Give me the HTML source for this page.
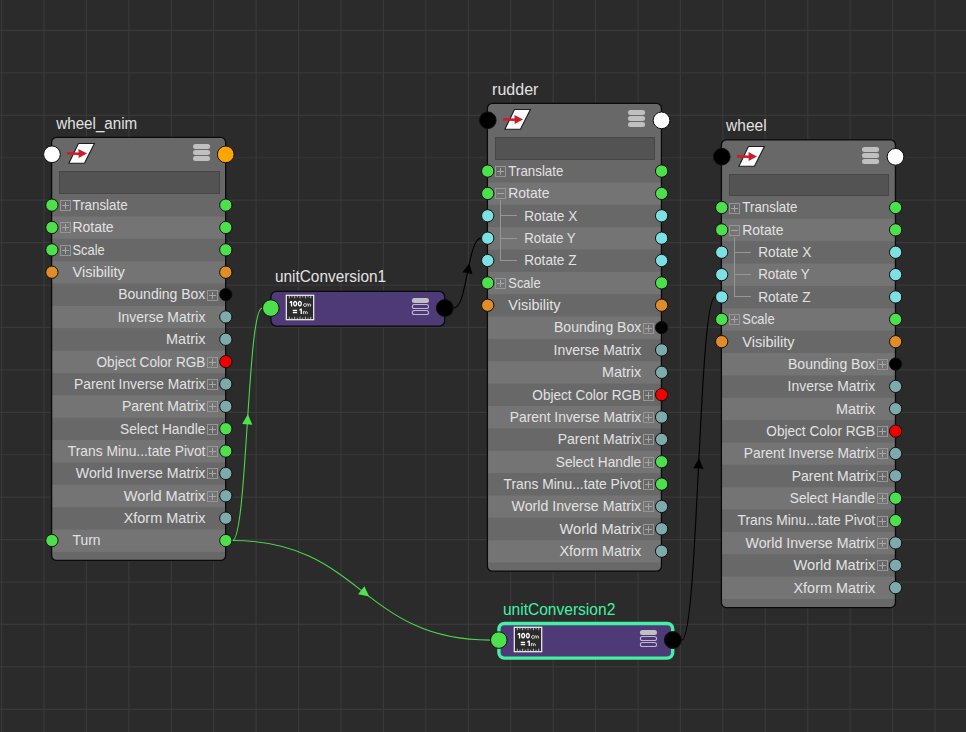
<!DOCTYPE html><html><head><meta charset="utf-8"><style>html,body{margin:0;padding:0;background:#2b2b2b;overflow:hidden}svg{display:block}</style></head><body><svg width="966" height="732" viewBox="0 0 966 732" font-family="Liberation Sans, sans-serif">
<rect width="966" height="732" fill="#2b2b2b"/>
<path d="M1.55 0V732M43.98 0V732M86.41 0V732M128.84 0V732M171.27 0V732M213.70 0V732M256.13 0V732M298.56 0V732M340.99 0V732M383.42 0V732M425.85 0V732M468.28 0V732M510.71 0V732M553.14 0V732M595.57 0V732M638.00 0V732M680.43 0V732M722.86 0V732M765.29 0V732M807.72 0V732M850.15 0V732M892.58 0V732M935.01 0V732M0 30.45H966M0 72.88H966M0 115.31H966M0 157.74H966M0 200.17H966M0 242.60H966M0 285.03H966M0 327.46H966M0 369.89H966M0 412.32H966M0 454.75H966M0 497.18H966M0 539.61H966M0 582.04H966M0 624.47H966M0 666.90H966M0 709.33H966" stroke="#393939" stroke-width="1.2" fill="none"/>
<path d="M232.40 540.53C247.25 540.53 247.25 308.10 262.10 308.10" stroke="#4bd64b" stroke-width="1.1" fill="none"/>
<path d="M247.89 414.24L252.34 424.64L242.16 423.99Z" fill="#4fe34f"/>
<path d="M232.40 540.53C361.25 540.53 361.25 640.10 490.10 640.10" stroke="#4bd64b" stroke-width="1.1" fill="none"/>
<path d="M369.24 596.49L358.13 594.35L364.37 586.28Z" fill="#4fe34f"/>
<path d="M453.75 308.05C467.42 308.05 467.42 238.16 481.10 238.16" stroke="#000000" stroke-width="1.1" fill="none"/>
<path d="M469.36 263.19L472.43 274.08L462.42 272.13Z" fill="#000000"/>
<path d="M681.75 640.05C698.42 640.05 698.42 296.97 715.10 296.97" stroke="#000000" stroke-width="1.1" fill="none"/>
<path d="M698.92 458.42L703.52 468.76L693.33 468.26Z" fill="#000000"/>
<text x="56.30" y="128.60" font-size="15.8" fill="#e2e2e2" text-anchor="start" textLength="80.9" lengthAdjust="spacingAndGlyphs">wheel_anim</text>
<clipPath id="c51"><rect x="51.60" y="137.40" width="174.05" height="423.06" rx="5"/></clipPath>
<g clip-path="url(#c51)">
<rect x="51.60" y="137.40" width="174.05" height="423.06" fill="#686868"/>
<rect x="51.60" y="216.46" width="174.05" height="22.36" fill="#747474"/>
<rect x="51.60" y="261.18" width="174.05" height="22.36" fill="#747474"/>
<rect x="51.60" y="305.90" width="174.05" height="22.36" fill="#747474"/>
<rect x="51.60" y="350.62" width="174.05" height="22.36" fill="#747474"/>
<rect x="51.60" y="395.34" width="174.05" height="22.36" fill="#747474"/>
<rect x="51.60" y="440.06" width="174.05" height="22.36" fill="#747474"/>
<rect x="51.60" y="484.78" width="174.05" height="22.36" fill="#747474"/>
<rect x="51.60" y="529.50" width="174.05" height="22.36" fill="#747474"/>
</g>
<rect x="51.60" y="137.40" width="174.05" height="423.06" rx="5" fill="none" stroke="#0a0a0a" stroke-width="1.3"/>
<rect x="59.50" y="171.50" width="160.00" height="22.00" fill="#535353" stroke="#464646" stroke-width="1"/>
<path d="M78.45 143.50L94.40 143.50L84.45 163.30L68.90 163.30Z" fill="#ffffff" stroke="#1c1c1c" stroke-width="1.1" stroke-linejoin="miter"/>
<path d="M67.00 152.10L78.60 152.40L78.40 148.90L87.00 153.40L78.60 158.10L78.60 154.90L67.00 154.70Z" fill="#cc1c2a"/>
<rect x="193.00" y="144.00" width="17.1" height="5.0" rx="2.5" fill="#c0c0c0"/>
<rect x="193.00" y="149.97" width="17.1" height="5.0" rx="2.5" fill="#c0c0c0"/>
<rect x="193.00" y="155.94" width="17.1" height="5.0" rx="2.5" fill="#c0c0c0"/>
<circle cx="51.95" cy="154.30" r="8.35" fill="#ffffff" stroke="#101010" stroke-width="1.0"/>
<circle cx="225.70" cy="154.40" r="8.35" fill="#ffa500" stroke="#101010" stroke-width="1.0"/>
<rect x="60.50" y="200.50" width="10" height="10" fill="none" stroke="#969696" stroke-width="1"/>
<path d="M62.00 205.50H69.00" stroke="#a6a6a6" stroke-width="1" fill="none"/>
<path d="M65.50 202.00V209.00" stroke="#a6a6a6" stroke-width="1" fill="none"/>
<text x="72.50" y="210.00" font-size="14.2" fill="#e2e2e2" text-anchor="start" textLength="55.1" lengthAdjust="spacingAndGlyphs">Translate</text>
<circle cx="51.90" cy="205.13" r="6.15" fill="#4de04d" stroke="#101010" stroke-width="1.0"/>
<circle cx="225.80" cy="205.13" r="6.15" fill="#4de04d" stroke="#101010" stroke-width="1.0"/>
<rect x="60.50" y="222.50" width="10" height="10" fill="none" stroke="#969696" stroke-width="1"/>
<path d="M62.00 227.50H69.00" stroke="#a6a6a6" stroke-width="1" fill="none"/>
<path d="M65.50 224.00V231.00" stroke="#a6a6a6" stroke-width="1" fill="none"/>
<text x="72.50" y="232.36" font-size="14.2" fill="#e2e2e2" text-anchor="start" textLength="41.1" lengthAdjust="spacingAndGlyphs">Rotate</text>
<circle cx="51.90" cy="227.49" r="6.15" fill="#4de04d" stroke="#101010" stroke-width="1.0"/>
<circle cx="225.80" cy="227.49" r="6.15" fill="#4de04d" stroke="#101010" stroke-width="1.0"/>
<rect x="60.50" y="245.50" width="10" height="10" fill="none" stroke="#969696" stroke-width="1"/>
<path d="M62.00 250.50H69.00" stroke="#a6a6a6" stroke-width="1" fill="none"/>
<path d="M65.50 247.00V254.00" stroke="#a6a6a6" stroke-width="1" fill="none"/>
<text x="72.50" y="254.72" font-size="14.2" fill="#e2e2e2" text-anchor="start" textLength="32.3" lengthAdjust="spacingAndGlyphs">Scale</text>
<circle cx="51.90" cy="249.85" r="6.15" fill="#4de04d" stroke="#101010" stroke-width="1.0"/>
<circle cx="225.80" cy="249.85" r="6.15" fill="#4de04d" stroke="#101010" stroke-width="1.0"/>
<text x="72.50" y="277.08" font-size="14.2" fill="#e2e2e2" text-anchor="start" textLength="52.3" lengthAdjust="spacingAndGlyphs">Visibility</text>
<circle cx="51.90" cy="272.21" r="6.15" fill="#e08c28" stroke="#101010" stroke-width="1.0"/>
<circle cx="225.80" cy="272.21" r="6.15" fill="#e08c28" stroke="#101010" stroke-width="1.0"/>
<rect x="207.50" y="290.50" width="10" height="10" fill="none" stroke="#969696" stroke-width="1"/>
<path d="M209.00 295.50H216.00" stroke="#a6a6a6" stroke-width="1" fill="none"/>
<path d="M212.50 292.00V299.00" stroke="#a6a6a6" stroke-width="1" fill="none"/>
<text x="205.40" y="299.44" font-size="14.2" fill="#e2e2e2" text-anchor="end" textLength="87.2" lengthAdjust="spacingAndGlyphs">Bounding Box</text>
<circle cx="225.80" cy="294.57" r="6.15" fill="#000000" stroke="#101010" stroke-width="1.0"/>
<text x="205.40" y="321.80" font-size="14.2" fill="#e2e2e2" text-anchor="end" textLength="87.7" lengthAdjust="spacingAndGlyphs">Inverse Matrix</text>
<circle cx="225.80" cy="316.93" r="6.15" fill="#7daaaa" stroke="#101010" stroke-width="1.0"/>
<text x="205.40" y="344.16" font-size="14.2" fill="#e2e2e2" text-anchor="end" textLength="39.3" lengthAdjust="spacingAndGlyphs">Matrix</text>
<circle cx="225.80" cy="339.29" r="6.15" fill="#7daaaa" stroke="#101010" stroke-width="1.0"/>
<rect x="207.50" y="357.50" width="10" height="10" fill="none" stroke="#969696" stroke-width="1"/>
<path d="M209.00 362.50H216.00" stroke="#a6a6a6" stroke-width="1" fill="none"/>
<path d="M212.50 359.00V366.00" stroke="#a6a6a6" stroke-width="1" fill="none"/>
<text x="205.40" y="366.52" font-size="14.2" fill="#e2e2e2" text-anchor="end" textLength="108.9" lengthAdjust="spacingAndGlyphs">Object Color RGB</text>
<circle cx="225.80" cy="361.65" r="6.15" fill="#f00000" stroke="#101010" stroke-width="1.0"/>
<rect x="207.50" y="379.50" width="10" height="10" fill="none" stroke="#969696" stroke-width="1"/>
<path d="M209.00 384.50H216.00" stroke="#a6a6a6" stroke-width="1" fill="none"/>
<path d="M212.50 381.00V388.00" stroke="#a6a6a6" stroke-width="1" fill="none"/>
<text x="205.40" y="388.88" font-size="14.2" fill="#e2e2e2" text-anchor="end" textLength="131.4" lengthAdjust="spacingAndGlyphs">Parent Inverse Matrix</text>
<circle cx="225.80" cy="384.01" r="6.15" fill="#7daaaa" stroke="#101010" stroke-width="1.0"/>
<rect x="207.50" y="401.50" width="10" height="10" fill="none" stroke="#969696" stroke-width="1"/>
<path d="M209.00 406.50H216.00" stroke="#a6a6a6" stroke-width="1" fill="none"/>
<path d="M212.50 403.00V410.00" stroke="#a6a6a6" stroke-width="1" fill="none"/>
<text x="205.40" y="411.24" font-size="14.2" fill="#e2e2e2" text-anchor="end" textLength="83.5" lengthAdjust="spacingAndGlyphs">Parent Matrix</text>
<circle cx="225.80" cy="406.37" r="6.15" fill="#7daaaa" stroke="#101010" stroke-width="1.0"/>
<rect x="207.50" y="424.50" width="10" height="10" fill="none" stroke="#969696" stroke-width="1"/>
<path d="M209.00 429.50H216.00" stroke="#a6a6a6" stroke-width="1" fill="none"/>
<path d="M212.50 426.00V433.00" stroke="#a6a6a6" stroke-width="1" fill="none"/>
<text x="205.40" y="433.60" font-size="14.2" fill="#e2e2e2" text-anchor="end" textLength="85.4" lengthAdjust="spacingAndGlyphs">Select Handle</text>
<circle cx="225.80" cy="428.73" r="6.15" fill="#4de04d" stroke="#101010" stroke-width="1.0"/>
<rect x="207.50" y="446.50" width="10" height="10" fill="none" stroke="#969696" stroke-width="1"/>
<path d="M209.00 451.50H216.00" stroke="#a6a6a6" stroke-width="1" fill="none"/>
<path d="M212.50 448.00V455.00" stroke="#a6a6a6" stroke-width="1" fill="none"/>
<text x="205.40" y="455.96" font-size="14.2" fill="#e2e2e2" text-anchor="end" textLength="137.6" lengthAdjust="spacingAndGlyphs">Trans Minu...tate Pivot</text>
<circle cx="225.80" cy="451.09" r="6.15" fill="#4de04d" stroke="#101010" stroke-width="1.0"/>
<rect x="207.50" y="468.50" width="10" height="10" fill="none" stroke="#969696" stroke-width="1"/>
<path d="M209.00 473.50H216.00" stroke="#a6a6a6" stroke-width="1" fill="none"/>
<path d="M212.50 470.00V477.00" stroke="#a6a6a6" stroke-width="1" fill="none"/>
<text x="205.40" y="478.32" font-size="14.2" fill="#e2e2e2" text-anchor="end" textLength="129.6" lengthAdjust="spacingAndGlyphs">World Inverse Matrix</text>
<circle cx="225.80" cy="473.45" r="6.15" fill="#7daaaa" stroke="#101010" stroke-width="1.0"/>
<rect x="207.50" y="491.50" width="10" height="10" fill="none" stroke="#969696" stroke-width="1"/>
<path d="M209.00 496.50H216.00" stroke="#a6a6a6" stroke-width="1" fill="none"/>
<path d="M212.50 493.00V500.00" stroke="#a6a6a6" stroke-width="1" fill="none"/>
<text x="205.40" y="500.68" font-size="14.2" fill="#e2e2e2" text-anchor="end" textLength="81.7" lengthAdjust="spacingAndGlyphs">World Matrix</text>
<circle cx="225.80" cy="495.81" r="6.15" fill="#7daaaa" stroke="#101010" stroke-width="1.0"/>
<text x="205.40" y="523.04" font-size="14.2" fill="#e2e2e2" text-anchor="end" textLength="81.7" lengthAdjust="spacingAndGlyphs">Xform Matrix</text>
<circle cx="225.80" cy="518.17" r="6.15" fill="#7daaaa" stroke="#101010" stroke-width="1.0"/>
<text x="72.50" y="545.40" font-size="14.2" fill="#e2e2e2" text-anchor="start" textLength="28.0" lengthAdjust="spacingAndGlyphs">Turn</text>
<circle cx="51.90" cy="540.53" r="6.15" fill="#4de04d" stroke="#101010" stroke-width="1.0"/>
<circle cx="225.80" cy="540.53" r="6.15" fill="#4de04d" stroke="#101010" stroke-width="1.0"/>
<text x="492.10" y="94.55" font-size="15.8" fill="#e2e2e2" text-anchor="start" textLength="46.3" lengthAdjust="spacingAndGlyphs">rudder</text>
<clipPath id="c486"><rect x="487.40" y="103.35" width="174.05" height="467.78" rx="5"/></clipPath>
<g clip-path="url(#c486)">
<rect x="487.40" y="103.35" width="174.05" height="467.78" fill="#686868"/>
<rect x="487.40" y="182.41" width="174.05" height="22.36" fill="#747474"/>
<rect x="487.40" y="227.13" width="174.05" height="22.36" fill="#747474"/>
<rect x="487.40" y="271.85" width="174.05" height="22.36" fill="#747474"/>
<rect x="487.40" y="316.57" width="174.05" height="22.36" fill="#747474"/>
<rect x="487.40" y="361.29" width="174.05" height="22.36" fill="#747474"/>
<rect x="487.40" y="406.01" width="174.05" height="22.36" fill="#747474"/>
<rect x="487.40" y="450.73" width="174.05" height="22.36" fill="#747474"/>
<rect x="487.40" y="495.45" width="174.05" height="22.36" fill="#747474"/>
<rect x="487.40" y="540.17" width="174.05" height="22.36" fill="#747474"/>
</g>
<rect x="487.40" y="103.35" width="174.05" height="467.78" rx="5" fill="none" stroke="#0a0a0a" stroke-width="1.3"/>
<rect x="495.50" y="137.50" width="159.00" height="22.00" fill="#535353" stroke="#464646" stroke-width="1"/>
<path d="M514.45 109.50L530.40 109.50L520.45 129.30L504.90 129.30Z" fill="#ffffff" stroke="#1c1c1c" stroke-width="1.1" stroke-linejoin="miter"/>
<path d="M503.00 118.10L514.60 118.40L514.40 114.90L523.00 119.40L514.60 124.10L514.60 120.90L503.00 120.70Z" fill="#cc1c2a"/>
<rect x="628.00" y="110.00" width="17.1" height="5.0" rx="2.5" fill="#c0c0c0"/>
<rect x="628.00" y="115.97" width="17.1" height="5.0" rx="2.5" fill="#c0c0c0"/>
<rect x="628.00" y="121.94" width="17.1" height="5.0" rx="2.5" fill="#c0c0c0"/>
<circle cx="487.75" cy="120.25" r="8.35" fill="#000000" stroke="#101010" stroke-width="1.0"/>
<circle cx="661.50" cy="120.35" r="8.35" fill="#ffffff" stroke="#101010" stroke-width="1.0"/>
<path d="M500.50 200.00V261.00M500.00 215.50H517.00M500.00 238.50H517.00M500.00 260.50H517.00" stroke="#969696" stroke-width="1" fill="none"/>
<rect x="495.50" y="166.50" width="10" height="10" fill="none" stroke="#969696" stroke-width="1"/>
<path d="M497.00 171.50H504.00" stroke="#a6a6a6" stroke-width="1" fill="none"/>
<path d="M500.50 168.00V175.00" stroke="#a6a6a6" stroke-width="1" fill="none"/>
<text x="508.30" y="175.95" font-size="14.2" fill="#e2e2e2" text-anchor="start" textLength="55.1" lengthAdjust="spacingAndGlyphs">Translate</text>
<circle cx="487.70" cy="171.08" r="6.15" fill="#4de04d" stroke="#101010" stroke-width="1.0"/>
<circle cx="661.60" cy="171.08" r="6.15" fill="#4de04d" stroke="#101010" stroke-width="1.0"/>
<rect x="495.50" y="188.50" width="10" height="10" fill="none" stroke="#969696" stroke-width="1"/>
<path d="M497.00 193.50H504.00" stroke="#a6a6a6" stroke-width="1" fill="none"/>
<text x="508.30" y="198.31" font-size="14.2" fill="#e2e2e2" text-anchor="start" textLength="41.1" lengthAdjust="spacingAndGlyphs">Rotate</text>
<circle cx="487.70" cy="193.44" r="6.15" fill="#4de04d" stroke="#101010" stroke-width="1.0"/>
<circle cx="661.60" cy="193.44" r="6.15" fill="#4de04d" stroke="#101010" stroke-width="1.0"/>
<text x="524.20" y="220.67" font-size="14.2" fill="#e2e2e2" text-anchor="start" textLength="53.1" lengthAdjust="spacingAndGlyphs">Rotate X</text>
<circle cx="487.70" cy="215.80" r="6.15" fill="#7de1e4" stroke="#101010" stroke-width="1.0"/>
<circle cx="661.60" cy="215.80" r="6.15" fill="#7de1e4" stroke="#101010" stroke-width="1.0"/>
<text x="524.20" y="243.03" font-size="14.2" fill="#e2e2e2" text-anchor="start" textLength="51.5" lengthAdjust="spacingAndGlyphs">Rotate Y</text>
<circle cx="487.70" cy="238.16" r="6.15" fill="#7de1e4" stroke="#101010" stroke-width="1.0"/>
<circle cx="661.60" cy="238.16" r="6.15" fill="#7de1e4" stroke="#101010" stroke-width="1.0"/>
<text x="524.20" y="265.39" font-size="14.2" fill="#e2e2e2" text-anchor="start" textLength="52.3" lengthAdjust="spacingAndGlyphs">Rotate Z</text>
<circle cx="487.70" cy="260.52" r="6.15" fill="#7de1e4" stroke="#101010" stroke-width="1.0"/>
<circle cx="661.60" cy="260.52" r="6.15" fill="#7de1e4" stroke="#101010" stroke-width="1.0"/>
<rect x="495.50" y="278.50" width="10" height="10" fill="none" stroke="#969696" stroke-width="1"/>
<path d="M497.00 283.50H504.00" stroke="#a6a6a6" stroke-width="1" fill="none"/>
<path d="M500.50 280.00V287.00" stroke="#a6a6a6" stroke-width="1" fill="none"/>
<text x="508.30" y="287.75" font-size="14.2" fill="#e2e2e2" text-anchor="start" textLength="32.3" lengthAdjust="spacingAndGlyphs">Scale</text>
<circle cx="487.70" cy="282.88" r="6.15" fill="#4de04d" stroke="#101010" stroke-width="1.0"/>
<circle cx="661.60" cy="282.88" r="6.15" fill="#4de04d" stroke="#101010" stroke-width="1.0"/>
<text x="508.30" y="310.11" font-size="14.2" fill="#e2e2e2" text-anchor="start" textLength="52.3" lengthAdjust="spacingAndGlyphs">Visibility</text>
<circle cx="487.70" cy="305.24" r="6.15" fill="#e08c28" stroke="#101010" stroke-width="1.0"/>
<circle cx="661.60" cy="305.24" r="6.15" fill="#e08c28" stroke="#101010" stroke-width="1.0"/>
<rect x="643.50" y="323.50" width="10" height="10" fill="none" stroke="#969696" stroke-width="1"/>
<path d="M645.00 328.50H652.00" stroke="#a6a6a6" stroke-width="1" fill="none"/>
<path d="M648.50 325.00V332.00" stroke="#a6a6a6" stroke-width="1" fill="none"/>
<text x="641.20" y="332.47" font-size="14.2" fill="#e2e2e2" text-anchor="end" textLength="87.2" lengthAdjust="spacingAndGlyphs">Bounding Box</text>
<circle cx="661.60" cy="327.60" r="6.15" fill="#000000" stroke="#101010" stroke-width="1.0"/>
<text x="641.20" y="354.83" font-size="14.2" fill="#e2e2e2" text-anchor="end" textLength="87.7" lengthAdjust="spacingAndGlyphs">Inverse Matrix</text>
<circle cx="661.60" cy="349.96" r="6.15" fill="#7daaaa" stroke="#101010" stroke-width="1.0"/>
<text x="641.20" y="377.19" font-size="14.2" fill="#e2e2e2" text-anchor="end" textLength="39.3" lengthAdjust="spacingAndGlyphs">Matrix</text>
<circle cx="661.60" cy="372.32" r="6.15" fill="#7daaaa" stroke="#101010" stroke-width="1.0"/>
<rect x="643.50" y="390.50" width="10" height="10" fill="none" stroke="#969696" stroke-width="1"/>
<path d="M645.00 395.50H652.00" stroke="#a6a6a6" stroke-width="1" fill="none"/>
<path d="M648.50 392.00V399.00" stroke="#a6a6a6" stroke-width="1" fill="none"/>
<text x="641.20" y="399.55" font-size="14.2" fill="#e2e2e2" text-anchor="end" textLength="108.9" lengthAdjust="spacingAndGlyphs">Object Color RGB</text>
<circle cx="661.60" cy="394.68" r="6.15" fill="#f00000" stroke="#101010" stroke-width="1.0"/>
<rect x="643.50" y="412.50" width="10" height="10" fill="none" stroke="#969696" stroke-width="1"/>
<path d="M645.00 417.50H652.00" stroke="#a6a6a6" stroke-width="1" fill="none"/>
<path d="M648.50 414.00V421.00" stroke="#a6a6a6" stroke-width="1" fill="none"/>
<text x="641.20" y="421.91" font-size="14.2" fill="#e2e2e2" text-anchor="end" textLength="131.4" lengthAdjust="spacingAndGlyphs">Parent Inverse Matrix</text>
<circle cx="661.60" cy="417.04" r="6.15" fill="#7daaaa" stroke="#101010" stroke-width="1.0"/>
<rect x="643.50" y="434.50" width="10" height="10" fill="none" stroke="#969696" stroke-width="1"/>
<path d="M645.00 439.50H652.00" stroke="#a6a6a6" stroke-width="1" fill="none"/>
<path d="M648.50 436.00V443.00" stroke="#a6a6a6" stroke-width="1" fill="none"/>
<text x="641.20" y="444.27" font-size="14.2" fill="#e2e2e2" text-anchor="end" textLength="83.5" lengthAdjust="spacingAndGlyphs">Parent Matrix</text>
<circle cx="661.60" cy="439.40" r="6.15" fill="#7daaaa" stroke="#101010" stroke-width="1.0"/>
<rect x="643.50" y="457.50" width="10" height="10" fill="none" stroke="#969696" stroke-width="1"/>
<path d="M645.00 462.50H652.00" stroke="#a6a6a6" stroke-width="1" fill="none"/>
<path d="M648.50 459.00V466.00" stroke="#a6a6a6" stroke-width="1" fill="none"/>
<text x="641.20" y="466.63" font-size="14.2" fill="#e2e2e2" text-anchor="end" textLength="85.4" lengthAdjust="spacingAndGlyphs">Select Handle</text>
<circle cx="661.60" cy="461.76" r="6.15" fill="#4de04d" stroke="#101010" stroke-width="1.0"/>
<rect x="643.50" y="479.50" width="10" height="10" fill="none" stroke="#969696" stroke-width="1"/>
<path d="M645.00 484.50H652.00" stroke="#a6a6a6" stroke-width="1" fill="none"/>
<path d="M648.50 481.00V488.00" stroke="#a6a6a6" stroke-width="1" fill="none"/>
<text x="641.20" y="488.99" font-size="14.2" fill="#e2e2e2" text-anchor="end" textLength="137.6" lengthAdjust="spacingAndGlyphs">Trans Minu...tate Pivot</text>
<circle cx="661.60" cy="484.12" r="6.15" fill="#4de04d" stroke="#101010" stroke-width="1.0"/>
<rect x="643.50" y="501.50" width="10" height="10" fill="none" stroke="#969696" stroke-width="1"/>
<path d="M645.00 506.50H652.00" stroke="#a6a6a6" stroke-width="1" fill="none"/>
<path d="M648.50 503.00V510.00" stroke="#a6a6a6" stroke-width="1" fill="none"/>
<text x="641.20" y="511.35" font-size="14.2" fill="#e2e2e2" text-anchor="end" textLength="129.6" lengthAdjust="spacingAndGlyphs">World Inverse Matrix</text>
<circle cx="661.60" cy="506.48" r="6.15" fill="#7daaaa" stroke="#101010" stroke-width="1.0"/>
<rect x="643.50" y="524.50" width="10" height="10" fill="none" stroke="#969696" stroke-width="1"/>
<path d="M645.00 529.50H652.00" stroke="#a6a6a6" stroke-width="1" fill="none"/>
<path d="M648.50 526.00V533.00" stroke="#a6a6a6" stroke-width="1" fill="none"/>
<text x="641.20" y="533.71" font-size="14.2" fill="#e2e2e2" text-anchor="end" textLength="81.7" lengthAdjust="spacingAndGlyphs">World Matrix</text>
<circle cx="661.60" cy="528.84" r="6.15" fill="#7daaaa" stroke="#101010" stroke-width="1.0"/>
<text x="641.20" y="556.07" font-size="14.2" fill="#e2e2e2" text-anchor="end" textLength="81.7" lengthAdjust="spacingAndGlyphs">Xform Matrix</text>
<circle cx="661.60" cy="551.20" r="6.15" fill="#7daaaa" stroke="#101010" stroke-width="1.0"/>
<text x="726.10" y="131.00" font-size="15.8" fill="#e2e2e2" text-anchor="start" textLength="40.5" lengthAdjust="spacingAndGlyphs">wheel</text>
<clipPath id="c720"><rect x="721.40" y="139.80" width="174.05" height="467.78" rx="5"/></clipPath>
<g clip-path="url(#c720)">
<rect x="721.40" y="139.80" width="174.05" height="467.78" fill="#686868"/>
<rect x="721.40" y="218.86" width="174.05" height="22.36" fill="#747474"/>
<rect x="721.40" y="263.58" width="174.05" height="22.36" fill="#747474"/>
<rect x="721.40" y="308.30" width="174.05" height="22.36" fill="#747474"/>
<rect x="721.40" y="353.02" width="174.05" height="22.36" fill="#747474"/>
<rect x="721.40" y="397.74" width="174.05" height="22.36" fill="#747474"/>
<rect x="721.40" y="442.46" width="174.05" height="22.36" fill="#747474"/>
<rect x="721.40" y="487.18" width="174.05" height="22.36" fill="#747474"/>
<rect x="721.40" y="531.90" width="174.05" height="22.36" fill="#747474"/>
<rect x="721.40" y="576.62" width="174.05" height="22.36" fill="#747474"/>
</g>
<rect x="721.40" y="139.80" width="174.05" height="467.78" rx="5" fill="none" stroke="#0a0a0a" stroke-width="1.3"/>
<rect x="729.50" y="174.50" width="159.00" height="21.00" fill="#535353" stroke="#464646" stroke-width="1"/>
<path d="M748.45 146.50L764.40 146.50L754.45 166.30L738.90 166.30Z" fill="#ffffff" stroke="#1c1c1c" stroke-width="1.1" stroke-linejoin="miter"/>
<path d="M737.00 155.10L748.60 155.40L748.40 151.90L757.00 156.40L748.60 161.10L748.60 157.90L737.00 157.70Z" fill="#cc1c2a"/>
<rect x="862.00" y="147.00" width="17.1" height="5.0" rx="2.5" fill="#c0c0c0"/>
<rect x="862.00" y="152.97" width="17.1" height="5.0" rx="2.5" fill="#c0c0c0"/>
<rect x="862.00" y="158.94" width="17.1" height="5.0" rx="2.5" fill="#c0c0c0"/>
<circle cx="721.75" cy="156.70" r="8.35" fill="#000000" stroke="#101010" stroke-width="1.0"/>
<circle cx="895.50" cy="156.80" r="8.35" fill="#ffffff" stroke="#101010" stroke-width="1.0"/>
<path d="M734.50 237.00V297.00M734.00 252.50H751.00M734.00 274.50H751.00M734.00 296.50H751.00" stroke="#969696" stroke-width="1" fill="none"/>
<rect x="729.50" y="203.50" width="10" height="10" fill="none" stroke="#969696" stroke-width="1"/>
<path d="M731.00 208.50H738.00" stroke="#a6a6a6" stroke-width="1" fill="none"/>
<path d="M734.50 205.00V212.00" stroke="#a6a6a6" stroke-width="1" fill="none"/>
<text x="742.30" y="212.40" font-size="14.2" fill="#e2e2e2" text-anchor="start" textLength="55.1" lengthAdjust="spacingAndGlyphs">Translate</text>
<circle cx="721.70" cy="207.53" r="6.15" fill="#4de04d" stroke="#101010" stroke-width="1.0"/>
<circle cx="895.60" cy="207.53" r="6.15" fill="#4de04d" stroke="#101010" stroke-width="1.0"/>
<rect x="729.50" y="225.50" width="10" height="10" fill="none" stroke="#969696" stroke-width="1"/>
<path d="M731.00 230.50H738.00" stroke="#a6a6a6" stroke-width="1" fill="none"/>
<text x="742.30" y="234.76" font-size="14.2" fill="#e2e2e2" text-anchor="start" textLength="41.1" lengthAdjust="spacingAndGlyphs">Rotate</text>
<circle cx="721.70" cy="229.89" r="6.15" fill="#4de04d" stroke="#101010" stroke-width="1.0"/>
<circle cx="895.60" cy="229.89" r="6.15" fill="#4de04d" stroke="#101010" stroke-width="1.0"/>
<text x="758.20" y="257.12" font-size="14.2" fill="#e2e2e2" text-anchor="start" textLength="53.1" lengthAdjust="spacingAndGlyphs">Rotate X</text>
<circle cx="721.70" cy="252.25" r="6.15" fill="#7de1e4" stroke="#101010" stroke-width="1.0"/>
<circle cx="895.60" cy="252.25" r="6.15" fill="#7de1e4" stroke="#101010" stroke-width="1.0"/>
<text x="758.20" y="279.48" font-size="14.2" fill="#e2e2e2" text-anchor="start" textLength="51.5" lengthAdjust="spacingAndGlyphs">Rotate Y</text>
<circle cx="721.70" cy="274.61" r="6.15" fill="#7de1e4" stroke="#101010" stroke-width="1.0"/>
<circle cx="895.60" cy="274.61" r="6.15" fill="#7de1e4" stroke="#101010" stroke-width="1.0"/>
<text x="758.20" y="301.84" font-size="14.2" fill="#e2e2e2" text-anchor="start" textLength="52.3" lengthAdjust="spacingAndGlyphs">Rotate Z</text>
<circle cx="721.70" cy="296.97" r="6.15" fill="#7de1e4" stroke="#101010" stroke-width="1.0"/>
<circle cx="895.60" cy="296.97" r="6.15" fill="#7de1e4" stroke="#101010" stroke-width="1.0"/>
<rect x="729.50" y="314.50" width="10" height="10" fill="none" stroke="#969696" stroke-width="1"/>
<path d="M731.00 319.50H738.00" stroke="#a6a6a6" stroke-width="1" fill="none"/>
<path d="M734.50 316.00V323.00" stroke="#a6a6a6" stroke-width="1" fill="none"/>
<text x="742.30" y="324.20" font-size="14.2" fill="#e2e2e2" text-anchor="start" textLength="32.3" lengthAdjust="spacingAndGlyphs">Scale</text>
<circle cx="721.70" cy="319.33" r="6.15" fill="#4de04d" stroke="#101010" stroke-width="1.0"/>
<circle cx="895.60" cy="319.33" r="6.15" fill="#4de04d" stroke="#101010" stroke-width="1.0"/>
<text x="742.30" y="346.56" font-size="14.2" fill="#e2e2e2" text-anchor="start" textLength="52.3" lengthAdjust="spacingAndGlyphs">Visibility</text>
<circle cx="721.70" cy="341.69" r="6.15" fill="#e08c28" stroke="#101010" stroke-width="1.0"/>
<circle cx="895.60" cy="341.69" r="6.15" fill="#e08c28" stroke="#101010" stroke-width="1.0"/>
<rect x="877.50" y="359.50" width="10" height="10" fill="none" stroke="#969696" stroke-width="1"/>
<path d="M879.00 364.50H886.00" stroke="#a6a6a6" stroke-width="1" fill="none"/>
<path d="M882.50 361.00V368.00" stroke="#a6a6a6" stroke-width="1" fill="none"/>
<text x="875.20" y="368.92" font-size="14.2" fill="#e2e2e2" text-anchor="end" textLength="87.2" lengthAdjust="spacingAndGlyphs">Bounding Box</text>
<circle cx="895.60" cy="364.05" r="6.15" fill="#000000" stroke="#101010" stroke-width="1.0"/>
<text x="875.20" y="391.28" font-size="14.2" fill="#e2e2e2" text-anchor="end" textLength="87.7" lengthAdjust="spacingAndGlyphs">Inverse Matrix</text>
<circle cx="895.60" cy="386.41" r="6.15" fill="#7daaaa" stroke="#101010" stroke-width="1.0"/>
<text x="875.20" y="413.64" font-size="14.2" fill="#e2e2e2" text-anchor="end" textLength="39.3" lengthAdjust="spacingAndGlyphs">Matrix</text>
<circle cx="895.60" cy="408.77" r="6.15" fill="#7daaaa" stroke="#101010" stroke-width="1.0"/>
<rect x="877.50" y="426.50" width="10" height="10" fill="none" stroke="#969696" stroke-width="1"/>
<path d="M879.00 431.50H886.00" stroke="#a6a6a6" stroke-width="1" fill="none"/>
<path d="M882.50 428.00V435.00" stroke="#a6a6a6" stroke-width="1" fill="none"/>
<text x="875.20" y="436.00" font-size="14.2" fill="#e2e2e2" text-anchor="end" textLength="108.9" lengthAdjust="spacingAndGlyphs">Object Color RGB</text>
<circle cx="895.60" cy="431.13" r="6.15" fill="#f00000" stroke="#101010" stroke-width="1.0"/>
<rect x="877.50" y="448.50" width="10" height="10" fill="none" stroke="#969696" stroke-width="1"/>
<path d="M879.00 453.50H886.00" stroke="#a6a6a6" stroke-width="1" fill="none"/>
<path d="M882.50 450.00V457.00" stroke="#a6a6a6" stroke-width="1" fill="none"/>
<text x="875.20" y="458.36" font-size="14.2" fill="#e2e2e2" text-anchor="end" textLength="131.4" lengthAdjust="spacingAndGlyphs">Parent Inverse Matrix</text>
<circle cx="895.60" cy="453.49" r="6.15" fill="#7daaaa" stroke="#101010" stroke-width="1.0"/>
<rect x="877.50" y="471.50" width="10" height="10" fill="none" stroke="#969696" stroke-width="1"/>
<path d="M879.00 476.50H886.00" stroke="#a6a6a6" stroke-width="1" fill="none"/>
<path d="M882.50 473.00V480.00" stroke="#a6a6a6" stroke-width="1" fill="none"/>
<text x="875.20" y="480.72" font-size="14.2" fill="#e2e2e2" text-anchor="end" textLength="83.5" lengthAdjust="spacingAndGlyphs">Parent Matrix</text>
<circle cx="895.60" cy="475.85" r="6.15" fill="#7daaaa" stroke="#101010" stroke-width="1.0"/>
<rect x="877.50" y="493.50" width="10" height="10" fill="none" stroke="#969696" stroke-width="1"/>
<path d="M879.00 498.50H886.00" stroke="#a6a6a6" stroke-width="1" fill="none"/>
<path d="M882.50 495.00V502.00" stroke="#a6a6a6" stroke-width="1" fill="none"/>
<text x="875.20" y="503.08" font-size="14.2" fill="#e2e2e2" text-anchor="end" textLength="85.4" lengthAdjust="spacingAndGlyphs">Select Handle</text>
<circle cx="895.60" cy="498.21" r="6.15" fill="#4de04d" stroke="#101010" stroke-width="1.0"/>
<rect x="877.50" y="516.50" width="10" height="10" fill="none" stroke="#969696" stroke-width="1"/>
<path d="M879.00 521.50H886.00" stroke="#a6a6a6" stroke-width="1" fill="none"/>
<path d="M882.50 518.00V525.00" stroke="#a6a6a6" stroke-width="1" fill="none"/>
<text x="875.20" y="525.44" font-size="14.2" fill="#e2e2e2" text-anchor="end" textLength="137.6" lengthAdjust="spacingAndGlyphs">Trans Minu...tate Pivot</text>
<circle cx="895.60" cy="520.57" r="6.15" fill="#4de04d" stroke="#101010" stroke-width="1.0"/>
<rect x="877.50" y="538.50" width="10" height="10" fill="none" stroke="#969696" stroke-width="1"/>
<path d="M879.00 543.50H886.00" stroke="#a6a6a6" stroke-width="1" fill="none"/>
<path d="M882.50 540.00V547.00" stroke="#a6a6a6" stroke-width="1" fill="none"/>
<text x="875.20" y="547.80" font-size="14.2" fill="#e2e2e2" text-anchor="end" textLength="129.6" lengthAdjust="spacingAndGlyphs">World Inverse Matrix</text>
<circle cx="895.60" cy="542.93" r="6.15" fill="#7daaaa" stroke="#101010" stroke-width="1.0"/>
<rect x="877.50" y="560.50" width="10" height="10" fill="none" stroke="#969696" stroke-width="1"/>
<path d="M879.00 565.50H886.00" stroke="#a6a6a6" stroke-width="1" fill="none"/>
<path d="M882.50 562.00V569.00" stroke="#a6a6a6" stroke-width="1" fill="none"/>
<text x="875.20" y="570.16" font-size="14.2" fill="#e2e2e2" text-anchor="end" textLength="81.7" lengthAdjust="spacingAndGlyphs">World Matrix</text>
<circle cx="895.60" cy="565.29" r="6.15" fill="#7daaaa" stroke="#101010" stroke-width="1.0"/>
<text x="875.20" y="592.52" font-size="14.2" fill="#e2e2e2" text-anchor="end" textLength="81.7" lengthAdjust="spacingAndGlyphs">Xform Matrix</text>
<circle cx="895.60" cy="587.65" r="6.15" fill="#7daaaa" stroke="#101010" stroke-width="1.0"/>
<text x="274.90" y="281.85" font-size="15.8" fill="#e2e2e2" text-anchor="start" textLength="111.3" lengthAdjust="spacingAndGlyphs">unitConversion1</text>
<rect x="270.90" y="291.45" width="173.8" height="34.65" rx="5.5" fill="#4f3a78" stroke="#0a0a0a" stroke-width="1.3"/>
<rect x="286.30" y="295.30" width="27.4" height="24.4" fill="#2b2b2b" stroke="#f4f4f4" stroke-width="1.2"/>
<path d="M289.30 295.90v2.4M289.30 319.10v-2.4M291.98 295.90v1.5M291.98 319.10v-1.5M294.66 295.90v2.4M294.66 319.10v-2.4M297.34 295.90v1.5M297.34 319.10v-1.5M300.02 295.90v2.4M300.02 319.10v-2.4M302.70 295.90v1.5M302.70 319.10v-1.5M305.38 295.90v2.4M305.38 319.10v-2.4M308.06 295.90v1.5M308.06 319.10v-1.5M310.74 295.90v2.4M310.74 319.10v-2.4" stroke="#dcdcdc" stroke-width="0.8" fill="none"/>
<path d="M289.70 302.65L291.40 301.35M291.55 300.90V306.50M295.15 301.50a1.45 2.2 0 1 0 0.01 0ZM299.85 301.50a1.45 2.2 0 1 0 0.01 0ZM299.40 310.25L301.10 308.95M301.25 308.50V314.10M292.80 310.50h4.3M292.80 312.60h4.3" stroke="#ffffff" stroke-width="1.3" fill="none"/>
<path d="M306.00 304.25A1.35 1.45 0 1 0 306.00 305.85M306.80 306.50V303.60M306.80 304.60Q307.80 303.30 308.70 304.40V306.50M308.70 304.60Q309.70 303.30 310.60 304.40V306.50M303.40 314.10V311.20M303.40 312.20Q304.40 310.90 305.30 312.00V314.10M305.30 312.20Q306.30 310.90 307.20 312.00V314.10" stroke="#f4f4f4" stroke-width="0.8" fill="none"/>
<rect x="411.90" y="298.05" width="17.1" height="5.0" rx="2.5" fill="#c0c0c0"/>
<rect x="412.35" y="304.47" width="16.200000000000003" height="4.1" rx="2.05" fill="none" stroke="#c0b6d4" stroke-width="1.05"/>
<rect x="412.35" y="310.44" width="16.200000000000003" height="4.1" rx="2.05" fill="none" stroke="#c0b6d4" stroke-width="1.05"/>
<circle cx="270.80" cy="308.10" r="8.30" fill="#4de04d" stroke="#101010" stroke-width="1.0"/>
<circle cx="444.85" cy="308.05" r="8.50" fill="#000000" stroke="#101010" stroke-width="1.0"/>
<text x="502.90" y="614.75" font-size="15.8" fill="#44f0a4" text-anchor="start" textLength="112.4" lengthAdjust="spacingAndGlyphs">unitConversion2</text>
<rect x="498.90" y="623.45" width="173.8" height="34.65" rx="5.5" fill="#4f3a78" stroke="#44f0a4" stroke-width="3.4"/>
<rect x="514.30" y="627.30" width="27.4" height="24.4" fill="#2b2b2b" stroke="#f4f4f4" stroke-width="1.2"/>
<path d="M517.30 627.90v2.4M517.30 651.10v-2.4M519.98 627.90v1.5M519.98 651.10v-1.5M522.66 627.90v2.4M522.66 651.10v-2.4M525.34 627.90v1.5M525.34 651.10v-1.5M528.02 627.90v2.4M528.02 651.10v-2.4M530.70 627.90v1.5M530.70 651.10v-1.5M533.38 627.90v2.4M533.38 651.10v-2.4M536.06 627.90v1.5M536.06 651.10v-1.5M538.74 627.90v2.4M538.74 651.10v-2.4" stroke="#dcdcdc" stroke-width="0.8" fill="none"/>
<path d="M517.70 634.65L519.40 633.35M519.55 632.90V638.50M523.15 633.50a1.45 2.2 0 1 0 0.01 0ZM527.85 633.50a1.45 2.2 0 1 0 0.01 0ZM527.40 642.25L529.10 640.95M529.25 640.50V646.10M520.80 642.50h4.3M520.80 644.60h4.3" stroke="#ffffff" stroke-width="1.3" fill="none"/>
<path d="M534.00 636.25A1.35 1.45 0 1 0 534.00 637.85M534.80 638.50V635.60M534.80 636.60Q535.80 635.30 536.70 636.40V638.50M536.70 636.60Q537.70 635.30 538.60 636.40V638.50M531.40 646.10V643.20M531.40 644.20Q532.40 642.90 533.30 644.00V646.10M533.30 644.20Q534.30 642.90 535.20 644.00V646.10" stroke="#f4f4f4" stroke-width="0.8" fill="none"/>
<rect x="639.90" y="630.05" width="17.1" height="5.0" rx="2.5" fill="#c0c0c0"/>
<rect x="640.35" y="636.47" width="16.200000000000003" height="4.1" rx="2.05" fill="none" stroke="#c0b6d4" stroke-width="1.05"/>
<rect x="640.35" y="642.44" width="16.200000000000003" height="4.1" rx="2.05" fill="none" stroke="#c0b6d4" stroke-width="1.05"/>
<circle cx="498.80" cy="640.10" r="8.30" fill="#4de04d" stroke="#101010" stroke-width="1.0"/>
<circle cx="672.85" cy="640.05" r="8.50" fill="#000000" stroke="#101010" stroke-width="1.0"/>
</svg></body></html>
